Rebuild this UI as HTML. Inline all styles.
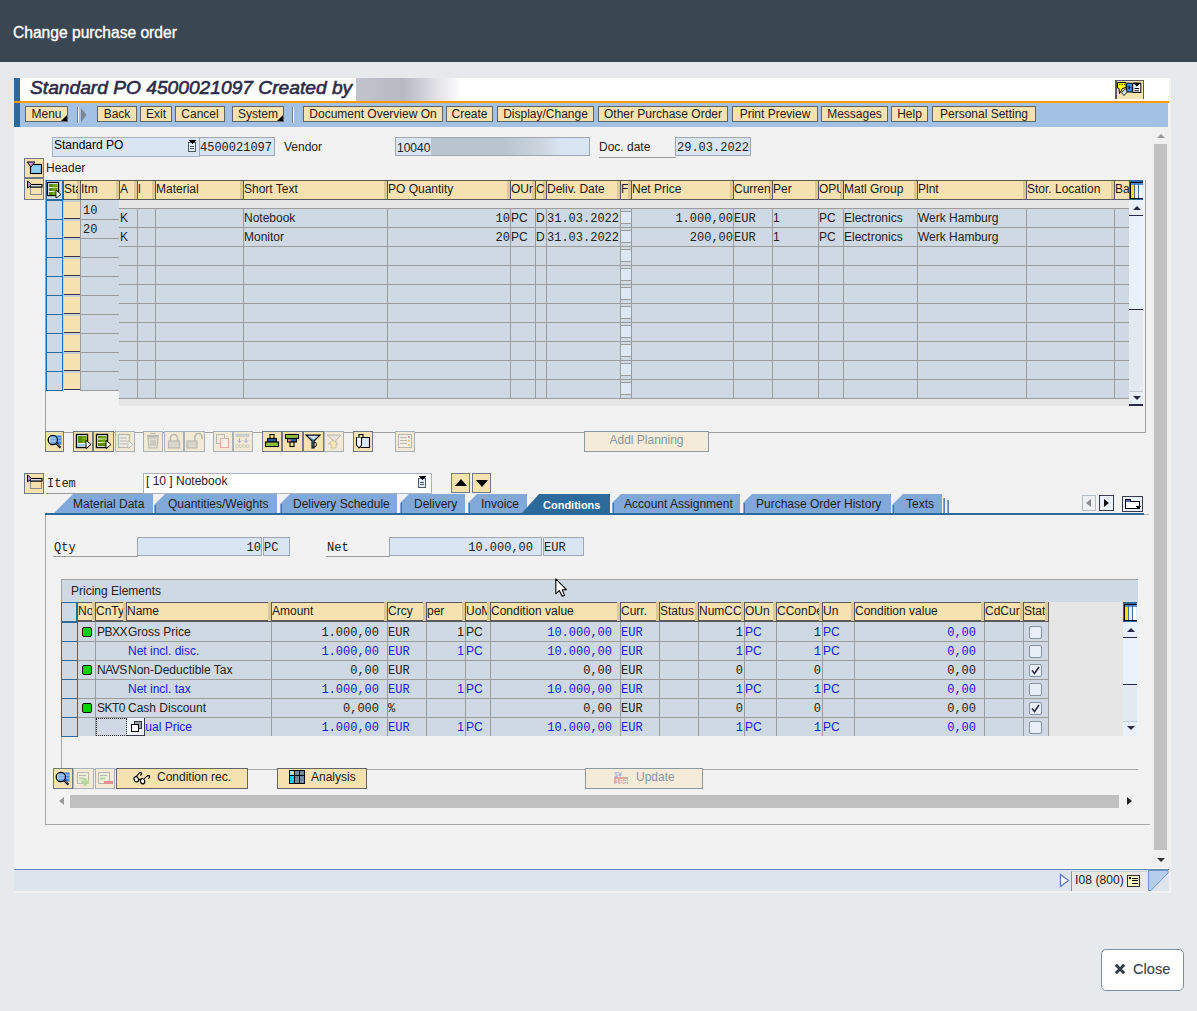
<!DOCTYPE html><html><head><meta charset="utf-8"><style>
*{margin:0;padding:0;box-sizing:border-box}
html,body{width:1197px;height:1011px;overflow:hidden;background:#e6eaed;font-family:"Liberation Sans",sans-serif;font-size:12px;color:#000}
div{position:absolute}
.t{white-space:nowrap;line-height:14px}
.m{font-family:"Liberation Mono",monospace;white-space:nowrap;line-height:14px}
.btn{background:#f5e2b0;border:1px solid #646464;text-align:center;line-height:14px;white-space:nowrap;color:#1a1a1a}
.ib{background:#f5e2b0;border:1px solid #6f7a86}
.ibd{background:#f3ead6;border:1px solid #a9b2bb}
.fld{background:#dae5f3;border:1px solid #a0a8b4}
.hd{background:#f5e2b0;height:20px;border-bottom:2px solid #5e5e5e}
.hc{height:18px;top:0;border-right:3px solid #d9c594;line-height:17px;padding-left:1px;overflow:hidden;white-space:nowrap;color:#1a1a1a}
</style></head><body>
<div style="left:0px;top:0px;width:1197px;height:62px;background:#3a4753"></div>
<div class="t" style="left:13px;top:24px;color:#fff;font-size:15.6px;line-height:18px;-webkit-text-stroke:0.35px #fff">Change purchase order</div>
<div style="left:14px;top:78px;width:1157px;height:815px;background:#f2f2f2"></div>
<div style="left:14px;top:78px;width:1155px;height:23px;background:#fff"></div>
<div style="left:14px;top:78px;width:6px;height:49px;background:#2e6a9c"></div>
<div class="t" style="left:30px;top:78px;font-size:19.2px;font-style:italic;color:#2b2b48;line-height:20px;-webkit-text-stroke:0.6px #2b2b48">Standard PO 4500021097 Created by</div>
<div style="left:356px;top:78px;width:106px;height:23px;background:linear-gradient(90deg,#c4c4cc 0%,#b8b8c4 45%,#e0e0e6 75%,#fff 100%)"></div>
<div style="left:1155px;top:78px;width:14px;height:0px;"></div>
<div style="left:14px;top:101px;width:1155px;height:2px;background:#ff9900"></div>
<div style="left:20px;top:103px;width:1148px;height:24px;background:#a3c1e5"></div>
<div class="btn" style="left:25px;top:106px;width:43px;height:16px">Menu</div>
<div class="btn" style="left:97px;top:106px;width:40px;height:16px">Back</div>
<div class="btn" style="left:140px;top:106px;width:32px;height:16px">Exit</div>
<div class="btn" style="left:175px;top:106px;width:50px;height:16px">Cancel</div>
<div class="btn" style="left:232px;top:106px;width:52px;height:16px">System</div>
<div class="btn" style="left:303px;top:106px;width:140px;height:16px">Document Overview On</div>
<div class="btn" style="left:446px;top:106px;width:47px;height:16px">Create</div>
<div class="btn" style="left:497px;top:106px;width:97px;height:16px">Display/Change</div>
<div class="btn" style="left:598px;top:106px;width:130px;height:16px">Other Purchase Order</div>
<div class="btn" style="left:732px;top:106px;width:86px;height:16px">Print Preview</div>
<div class="btn" style="left:821px;top:106px;width:67px;height:16px">Messages</div>
<div class="btn" style="left:891px;top:106px;width:37px;height:16px">Help</div>
<div class="btn" style="left:932px;top:106px;width:104px;height:16px">Personal Setting</div>
<div style="left:61px;top:115px;width:0;height:0;border-left:6px solid transparent;border-bottom:6px solid #000"></div>
<div style="left:277px;top:115px;width:0;height:0;border-left:6px solid transparent;border-bottom:6px solid #000"></div>
<div style="left:77px;top:107px;width:2px;height:16px;background:#fff;border-left:1px solid #6f7f90"></div>
<svg style="position:absolute;left:81px;top:108px" width="6" height="15"><polygon points="0,0 5.5,7 0,14" fill="#7a8494"/></svg>
<div style="left:292px;top:107px;width:2px;height:16px;background:#fff;border-left:1px solid #6f7f90"></div>
<div style="left:52px;top:137px;width:148px;height:20px;background:#dae5f3;border:1px solid #a7b3c2;border-right:none"></div>
<div class="t" style="left:54px;top:138px;line-height:14px">Standard PO</div>
<div class="fld" style="left:199px;top:137px;width:76px;height:19px"></div>
<div class="m" style="left:200px;top:141px;font-size:12px;color:#222">4500021097</div>
<div class="t" style="left:284px;top:140px;color:#222">Vendor</div>
<div class="fld" style="left:395px;top:137px;width:195px;height:19px"></div>
<div class="t" style="left:397px;top:140.5px;color:#222">10040</div>
<div style="left:431px;top:138px;width:131px;height:17px;background:linear-gradient(90deg,#b9c4cf 0%,#b9c4cf 55%,#cdd6df 85%,#dae5f3 100%)"></div>
<div class="t" style="left:599px;top:140px;color:#222">Doc. date</div>
<div style="left:599px;top:157px;width:77px;height:1px;background:#9a9a9a"></div>
<div class="fld" style="left:675px;top:137px;width:76px;height:19px"></div>
<div class="m" style="left:677px;top:141px;font-size:12px;color:#222">29.03.2022</div>
<div class="ib" style="left:24px;top:158px;width:20px;height:20px"></div>
<div class="t" style="left:46px;top:161px;color:#222">Header</div>
<div class="ib" style="left:24px;top:178px;width:20px;height:22px"></div>
<div style="left:45px;top:180px;width:1101px;height:253px;border:1px solid #a0a0a0;border-top:none;background:#f2f2f2"></div>
<div style="left:46px;top:180px;width:1083px;height:20px;background:#f5e2b0;border-top:1px solid #5a5a5a;border-bottom:1px solid #5a5a5a"></div>
<div style="left:63px;top:181px;width:17px;height:18px;border-left:1px solid #5a5a5a;overflow:hidden"><div style="right:0;top:0;width:3px;height:18px;background:#dcc895"></div><div style="left:0;top:0;width:14px;height:18px;overflow:hidden"><div class="t" style="left:0px;top:1px;color:#1a1a1a">Sta</div></div></div>
<div style="left:80px;top:181px;width:39px;height:18px;border-left:1px solid #5a5a5a;overflow:hidden"><div style="right:0;top:0;width:3px;height:18px;background:#dcc895"></div><div style="left:0;top:0;width:36px;height:18px;overflow:hidden"><div class="t" style="left:0px;top:1px;color:#1a1a1a">Itm</div></div></div>
<div style="left:119px;top:181px;width:18px;height:18px;border-left:1px solid #5a5a5a;overflow:hidden"><div style="right:0;top:0;width:3px;height:18px;background:#dcc895"></div><div style="left:0;top:0;width:15px;height:18px;overflow:hidden"><div class="t" style="left:0px;top:1px;color:#1a1a1a">A</div></div></div>
<div style="left:137px;top:181px;width:18px;height:18px;border-left:1px solid #5a5a5a;overflow:hidden"><div style="right:0;top:0;width:3px;height:18px;background:#dcc895"></div><div style="left:0;top:0;width:15px;height:18px;overflow:hidden"><div class="t" style="left:0px;top:1px;color:#1a1a1a">l</div></div></div>
<div style="left:155px;top:181px;width:88px;height:18px;border-left:1px solid #5a5a5a;overflow:hidden"><div style="right:0;top:0;width:3px;height:18px;background:#dcc895"></div><div style="left:0;top:0;width:85px;height:18px;overflow:hidden"><div class="t" style="left:0px;top:1px;color:#1a1a1a">Material</div></div></div>
<div style="left:243px;top:181px;width:144px;height:18px;border-left:1px solid #5a5a5a;overflow:hidden"><div style="right:0;top:0;width:3px;height:18px;background:#dcc895"></div><div style="left:0;top:0;width:141px;height:18px;overflow:hidden"><div class="t" style="left:0px;top:1px;color:#1a1a1a">Short Text</div></div></div>
<div style="left:387px;top:181px;width:123px;height:18px;border-left:1px solid #5a5a5a;overflow:hidden"><div style="right:0;top:0;width:3px;height:18px;background:#dcc895"></div><div style="left:0;top:0;width:120px;height:18px;overflow:hidden"><div class="t" style="left:0px;top:1px;color:#1a1a1a">PO Quantity</div></div></div>
<div style="left:510px;top:181px;width:25px;height:18px;border-left:1px solid #5a5a5a;overflow:hidden"><div style="right:0;top:0;width:3px;height:18px;background:#dcc895"></div><div style="left:0;top:0;width:22px;height:18px;overflow:hidden"><div class="t" style="left:0px;top:1px;color:#1a1a1a">OUn</div></div></div>
<div style="left:535px;top:181px;width:11px;height:18px;border-left:1px solid #5a5a5a;overflow:hidden"><div style="right:0;top:0;width:3px;height:18px;background:#dcc895"></div><div style="left:0;top:0;width:8px;height:18px;overflow:hidden"><div class="t" style="left:0px;top:1px;color:#1a1a1a">C</div></div></div>
<div style="left:546px;top:181px;width:74px;height:18px;border-left:1px solid #5a5a5a;overflow:hidden"><div style="right:0;top:0;width:3px;height:18px;background:#dcc895"></div><div style="left:0;top:0;width:71px;height:18px;overflow:hidden"><div class="t" style="left:0px;top:1px;color:#1a1a1a">Deliv. Date</div></div></div>
<div style="left:620px;top:181px;width:11px;height:18px;border-left:1px solid #5a5a5a;overflow:hidden"><div style="right:0;top:0;width:3px;height:18px;background:#dcc895"></div><div style="left:0;top:0;width:8px;height:18px;overflow:hidden"><div class="t" style="left:0px;top:1px;color:#1a1a1a">F</div></div></div>
<div style="left:631px;top:181px;width:102px;height:18px;border-left:1px solid #5a5a5a;overflow:hidden"><div style="right:0;top:0;width:3px;height:18px;background:#dcc895"></div><div style="left:0;top:0;width:99px;height:18px;overflow:hidden"><div class="t" style="left:0px;top:1px;color:#1a1a1a">Net Price</div></div></div>
<div style="left:733px;top:181px;width:39px;height:18px;border-left:1px solid #5a5a5a;overflow:hidden"><div style="right:0;top:0;width:3px;height:18px;background:#dcc895"></div><div style="left:0;top:0;width:36px;height:18px;overflow:hidden"><div class="t" style="left:0px;top:1px;color:#1a1a1a">Curren</div></div></div>
<div style="left:772px;top:181px;width:46px;height:18px;border-left:1px solid #5a5a5a;overflow:hidden"><div style="right:0;top:0;width:3px;height:18px;background:#dcc895"></div><div style="left:0;top:0;width:43px;height:18px;overflow:hidden"><div class="t" style="left:0px;top:1px;color:#1a1a1a">Per</div></div></div>
<div style="left:818px;top:181px;width:25px;height:18px;border-left:1px solid #5a5a5a;overflow:hidden"><div style="right:0;top:0;width:3px;height:18px;background:#dcc895"></div><div style="left:0;top:0;width:22px;height:18px;overflow:hidden"><div class="t" style="left:0px;top:1px;color:#1a1a1a">OPU</div></div></div>
<div style="left:843px;top:181px;width:74px;height:18px;border-left:1px solid #5a5a5a;overflow:hidden"><div style="right:0;top:0;width:3px;height:18px;background:#dcc895"></div><div style="left:0;top:0;width:71px;height:18px;overflow:hidden"><div class="t" style="left:0px;top:1px;color:#1a1a1a">Matl Group</div></div></div>
<div style="left:917px;top:181px;width:109px;height:18px;border-left:1px solid #5a5a5a;overflow:hidden"><div style="right:0;top:0;width:3px;height:18px;background:#dcc895"></div><div style="left:0;top:0;width:106px;height:18px;overflow:hidden"><div class="t" style="left:0px;top:1px;color:#1a1a1a">Plnt</div></div></div>
<div style="left:1026px;top:181px;width:88px;height:18px;border-left:1px solid #5a5a5a;overflow:hidden"><div style="right:0;top:0;width:3px;height:18px;background:#dcc895"></div><div style="left:0;top:0;width:85px;height:18px;overflow:hidden"><div class="t" style="left:0px;top:1px;color:#1a1a1a">Stor. Location</div></div></div>
<div style="left:1114px;top:181px;width:15px;height:18px;border-left:1px solid #5a5a5a;overflow:hidden"><div class="t" style="left:0px;top:1px;color:#1a1a1a">Ba</div></div>
<div style="left:46px;top:180px;width:17px;height:20px;border:1px solid #2e6a9c;background:#cfd9e3"></div>
<div style="left:63px;top:200px;width:17px;height:190px;background:#c8d0d8"></div>
<div style="left:80px;top:200px;width:39px;height:190px;background:#cfd9e3;border-left:1px solid #9c9c9c"></div>
<div style="left:46px;top:200px;width:17px;height:20px;border:1px solid #2e6a9c;background:#cfd9e3"></div>
<div style="left:64px;top:202px;width:16px;height:16px;background:#f5e2b0"></div>
<div style="left:64px;top:218px;width:16px;height:1px;background:#34344e"></div>
<div style="left:80px;top:219px;width:39px;height:1px;background:#9c9c9c"></div>
<div style="left:46px;top:219px;width:17px;height:20px;border:1px solid #2e6a9c;background:#cfd9e3"></div>
<div style="left:64px;top:221px;width:16px;height:16px;background:#f5e2b0"></div>
<div style="left:64px;top:237px;width:16px;height:1px;background:#34344e"></div>
<div style="left:80px;top:238px;width:39px;height:1px;background:#9c9c9c"></div>
<div style="left:46px;top:238px;width:17px;height:20px;border:1px solid #2e6a9c;background:#cfd9e3"></div>
<div style="left:64px;top:240px;width:16px;height:16px;background:#f5e2b0"></div>
<div style="left:64px;top:256px;width:16px;height:1px;background:#34344e"></div>
<div style="left:80px;top:257px;width:39px;height:1px;background:#9c9c9c"></div>
<div style="left:46px;top:257px;width:17px;height:20px;border:1px solid #2e6a9c;background:#cfd9e3"></div>
<div style="left:64px;top:259px;width:16px;height:16px;background:#f5e2b0"></div>
<div style="left:64px;top:275px;width:16px;height:1px;background:#34344e"></div>
<div style="left:80px;top:276px;width:39px;height:1px;background:#9c9c9c"></div>
<div style="left:46px;top:276px;width:17px;height:20px;border:1px solid #2e6a9c;background:#cfd9e3"></div>
<div style="left:64px;top:278px;width:16px;height:16px;background:#f5e2b0"></div>
<div style="left:64px;top:294px;width:16px;height:1px;background:#34344e"></div>
<div style="left:80px;top:295px;width:39px;height:1px;background:#9c9c9c"></div>
<div style="left:46px;top:295px;width:17px;height:20px;border:1px solid #2e6a9c;background:#cfd9e3"></div>
<div style="left:64px;top:297px;width:16px;height:16px;background:#f5e2b0"></div>
<div style="left:64px;top:313px;width:16px;height:1px;background:#34344e"></div>
<div style="left:80px;top:314px;width:39px;height:1px;background:#9c9c9c"></div>
<div style="left:46px;top:314px;width:17px;height:20px;border:1px solid #2e6a9c;background:#cfd9e3"></div>
<div style="left:64px;top:316px;width:16px;height:16px;background:#f5e2b0"></div>
<div style="left:64px;top:332px;width:16px;height:1px;background:#34344e"></div>
<div style="left:80px;top:333px;width:39px;height:1px;background:#9c9c9c"></div>
<div style="left:46px;top:333px;width:17px;height:20px;border:1px solid #2e6a9c;background:#cfd9e3"></div>
<div style="left:64px;top:335px;width:16px;height:16px;background:#f5e2b0"></div>
<div style="left:64px;top:351px;width:16px;height:1px;background:#34344e"></div>
<div style="left:80px;top:352px;width:39px;height:1px;background:#9c9c9c"></div>
<div style="left:46px;top:352px;width:17px;height:20px;border:1px solid #2e6a9c;background:#cfd9e3"></div>
<div style="left:64px;top:354px;width:16px;height:16px;background:#f5e2b0"></div>
<div style="left:64px;top:370px;width:16px;height:1px;background:#34344e"></div>
<div style="left:80px;top:371px;width:39px;height:1px;background:#9c9c9c"></div>
<div style="left:46px;top:371px;width:17px;height:20px;border:1px solid #2e6a9c;background:#cfd9e3"></div>
<div style="left:64px;top:373px;width:16px;height:16px;background:#f5e2b0"></div>
<div style="left:64px;top:389px;width:16px;height:1px;background:#34344e"></div>
<div style="left:80px;top:390px;width:39px;height:1px;background:#9c9c9c"></div>
<div class="m" style="left:83px;top:204px;color:#222">10</div>
<div class="m" style="left:83px;top:223px;color:#222">20</div>
<div style="left:119px;top:200px;width:1010px;height:8px;background:#e6e6e6"></div>
<div style="left:119px;top:399px;width:1010px;height:7px;background:#e6e6e6"></div>
<div style="left:119px;top:208px;width:1010px;height:191px;background:#cfd9e3;background-image:repeating-linear-gradient(180deg,#9c9c9c 0,#9c9c9c 1px,transparent 1px,transparent 19px)"></div>
<div style="left:137px;top:208px;width:1px;height:190px;background:#9c9c9c"></div>
<div style="left:155px;top:208px;width:1px;height:190px;background:#9c9c9c"></div>
<div style="left:243px;top:208px;width:1px;height:190px;background:#9c9c9c"></div>
<div style="left:387px;top:208px;width:1px;height:190px;background:#9c9c9c"></div>
<div style="left:510px;top:208px;width:1px;height:190px;background:#9c9c9c"></div>
<div style="left:535px;top:208px;width:1px;height:190px;background:#9c9c9c"></div>
<div style="left:546px;top:208px;width:1px;height:190px;background:#9c9c9c"></div>
<div style="left:620px;top:208px;width:1px;height:190px;background:#9c9c9c"></div>
<div style="left:631px;top:208px;width:1px;height:190px;background:#9c9c9c"></div>
<div style="left:733px;top:208px;width:1px;height:190px;background:#9c9c9c"></div>
<div style="left:772px;top:208px;width:1px;height:190px;background:#9c9c9c"></div>
<div style="left:818px;top:208px;width:1px;height:190px;background:#9c9c9c"></div>
<div style="left:843px;top:208px;width:1px;height:190px;background:#9c9c9c"></div>
<div style="left:917px;top:208px;width:1px;height:190px;background:#9c9c9c"></div>
<div style="left:1026px;top:208px;width:1px;height:190px;background:#9c9c9c"></div>
<div style="left:1114px;top:208px;width:1px;height:190px;background:#9c9c9c"></div>
<div style="left:119px;top:398px;width:1010px;height:1px;background:#9c9c9c"></div>
<div style="left:621px;top:211px;width:10px;height:13px;background:#dde8f4;border-top:1px solid #9c9c9c;border-bottom:1px solid #9c9c9c"></div>
<div style="left:621px;top:230px;width:10px;height:13px;background:#dde8f4;border-top:1px solid #9c9c9c;border-bottom:1px solid #9c9c9c"></div>
<div style="left:621px;top:249px;width:10px;height:13px;background:#dde8f4;border-top:1px solid #9c9c9c;border-bottom:1px solid #9c9c9c"></div>
<div style="left:621px;top:268px;width:10px;height:13px;background:#dde8f4;border-top:1px solid #9c9c9c;border-bottom:1px solid #9c9c9c"></div>
<div style="left:621px;top:287px;width:10px;height:13px;background:#dde8f4;border-top:1px solid #9c9c9c;border-bottom:1px solid #9c9c9c"></div>
<div style="left:621px;top:306px;width:10px;height:13px;background:#dde8f4;border-top:1px solid #9c9c9c;border-bottom:1px solid #9c9c9c"></div>
<div style="left:621px;top:325px;width:10px;height:13px;background:#dde8f4;border-top:1px solid #9c9c9c;border-bottom:1px solid #9c9c9c"></div>
<div style="left:621px;top:344px;width:10px;height:13px;background:#dde8f4;border-top:1px solid #9c9c9c;border-bottom:1px solid #9c9c9c"></div>
<div style="left:621px;top:363px;width:10px;height:13px;background:#dde8f4;border-top:1px solid #9c9c9c;border-bottom:1px solid #9c9c9c"></div>
<div style="left:621px;top:382px;width:10px;height:13px;background:#dde8f4;border-top:1px solid #9c9c9c;border-bottom:1px solid #9c9c9c"></div>
<div class="t" style="left:120px;top:211px;color:#222">K</div>
<div class="t" style="left:244px;top:211px;color:#222">Notebook</div>
<div class="m" style="left:387px;top:212px;width:123px;text-align:right;color:#222">10</div>
<div class="t" style="left:511px;top:211px;color:#222">PC</div>
<div class="t" style="left:536px;top:211px;color:#222">D</div>
<div class="m" style="left:547px;top:212px;color:#222">31.03.2022</div>
<div class="m" style="left:631px;top:212px;width:102px;text-align:right;color:#222">1.000,00</div>
<div class="m" style="left:734px;top:212px;color:#222">EUR</div>
<div class="t" style="left:773px;top:211px;color:#222">1</div>
<div class="t" style="left:819px;top:211px;color:#222">PC</div>
<div class="t" style="left:844px;top:211px;color:#222">Electronics</div>
<div class="t" style="left:918px;top:211px;color:#222">Werk Hamburg</div>
<div class="t" style="left:120px;top:230px;color:#222">K</div>
<div class="t" style="left:244px;top:230px;color:#222">Monitor</div>
<div class="m" style="left:387px;top:231px;width:123px;text-align:right;color:#222">20</div>
<div class="t" style="left:511px;top:230px;color:#222">PC</div>
<div class="t" style="left:536px;top:230px;color:#222">D</div>
<div class="m" style="left:547px;top:231px;color:#222">31.03.2022</div>
<div class="m" style="left:631px;top:231px;width:102px;text-align:right;color:#222">200,00</div>
<div class="m" style="left:734px;top:231px;color:#222">EUR</div>
<div class="t" style="left:773px;top:230px;color:#222">1</div>
<div class="t" style="left:819px;top:230px;color:#222">PC</div>
<div class="t" style="left:844px;top:230px;color:#222">Electronics</div>
<div class="t" style="left:918px;top:230px;color:#222">Werk Hamburg</div>
<div style="left:1129px;top:200px;width:14px;height:206px;background:#e3e9f1"></div>
<div style="left:1129px;top:200px;width:14px;height:109px;background:#e9f1fa"></div>
<div style="left:1129px;top:309px;width:14px;height:1px;background:#2a2a50"></div>
<div style="left:1132.5px;top:205.5px;width:0;height:0;border-left:4.5px solid transparent;border-right:4.5px solid transparent;border-bottom:4.5px solid #2a2a48"></div>
<div style="left:1129px;top:215px;width:14px;height:1px;background:#2a2a50"></div>
<div style="left:1129px;top:391px;width:14px;height:15px;background:#e9f1fa;border-top:1px solid #c4ccd6;border-bottom:2px solid #2a2a50"></div>
<div style="left:1132.5px;top:396px;width:0;height:0;border-left:4.5px solid transparent;border-right:4.5px solid transparent;border-top:4.5px solid #2a2a48"></div>
<div class="ib" style="left:45px;top:431px;width:19px;height:21px"></div>
<div class="ib" style="left:73px;top:431px;width:20px;height:21px"></div>
<div class="ib" style="left:93px;top:431px;width:21px;height:21px"></div>
<div class="ibd" style="left:115px;top:431px;width:20px;height:21px"></div>
<div class="ibd" style="left:143px;top:431px;width:20px;height:21px"></div>
<div class="ibd" style="left:164px;top:431px;width:20px;height:21px"></div>
<div class="ibd" style="left:184px;top:431px;width:21px;height:21px"></div>
<div class="ibd" style="left:213px;top:431px;width:20px;height:21px"></div>
<div class="ibd" style="left:233px;top:431px;width:20px;height:21px"></div>
<div class="ib" style="left:262px;top:431px;width:20px;height:21px"></div>
<div class="ib" style="left:282px;top:431px;width:21px;height:21px"></div>
<div class="ib" style="left:303px;top:431px;width:21px;height:21px"></div>
<div class="ibd" style="left:324px;top:431px;width:20px;height:21px"></div>
<div class="ib" style="left:353px;top:431px;width:20px;height:21px"></div>
<div class="ibd" style="left:395px;top:431px;width:20px;height:21px"></div>
<div class="btn" style="left:584px;top:431px;width:125px;height:21px;background:#f4ecd8;border-color:#8a98a4;color:#8896a2;line-height:17px;font-size:12px">Addl Planning</div>
<div class="ib" style="left:24px;top:473px;width:20px;height:21px"></div>
<div class="m" style="left:47px;top:476.5px;color:#222">Item</div>
<div style="left:46px;top:493px;width:97px;height:1px;background:#9a9a9a"></div>
<div style="left:143px;top:473px;width:289px;height:21px;background:#fff;border:1px solid #a7b3c2"></div>
<div class="t" style="left:146px;top:474px;color:#222">[ 10 ] Notebook</div>
<div class="ib" style="left:451px;top:473px;width:19px;height:20px"></div>
<div style="left:455px;top:479px;width:0;height:0;border-left:6px solid transparent;border-right:6px solid transparent;border-bottom:7px solid #000"></div>
<div class="ib" style="left:472px;top:473px;width:19px;height:20px"></div>
<div style="left:476px;top:480px;width:0;height:0;border-left:6px solid transparent;border-right:6px solid transparent;border-top:7px solid #000"></div>
<svg style="position:absolute;left:54px;top:494px" width="99" height="19"><polygon points="19,0 99,0 99,19 0,19" fill="#80a8d8"/></svg>
<div class="t" style="left:73px;top:497px;color:#1f1f1f;font-weight:normal;font-size:12px;line-height:14px">Material Data</div>
<svg style="position:absolute;left:154px;top:494px" width="123" height="19"><polygon points="11,0 123,0 123,19 0,19 0,11" fill="#80a8d8"/></svg>
<div style="left:155px;top:505px;width:1px;height:8px;background:#4a72aa"></div>
<div class="t" style="left:168px;top:497px;color:#1f1f1f;font-weight:normal;font-size:12px;line-height:14px">Quantities/Weights</div>
<svg style="position:absolute;left:280px;top:494px" width="117" height="19"><polygon points="10,0 117,0 117,19 0,19 0,10" fill="#80a8d8"/></svg>
<div style="left:281px;top:504px;width:1px;height:9px;background:#4a72aa"></div>
<div class="t" style="left:293px;top:497px;color:#1f1f1f;font-weight:normal;font-size:12px;line-height:14px">Delivery Schedule</div>
<svg style="position:absolute;left:400px;top:494px" width="65" height="19"><polygon points="9,0 65,0 65,19 0,19 0,9" fill="#80a8d8"/></svg>
<div style="left:401px;top:503px;width:1px;height:10px;background:#4a72aa"></div>
<div class="t" style="left:414px;top:497px;color:#1f1f1f;font-weight:normal;font-size:12px;line-height:14px">Delivery</div>
<svg style="position:absolute;left:468px;top:494px" width="59" height="19"><polygon points="9,0 59,0 59,19 0,19 0,9" fill="#80a8d8"/></svg>
<div style="left:469px;top:503px;width:1px;height:10px;background:#4a72aa"></div>
<div class="t" style="left:481px;top:497px;color:#1f1f1f;font-weight:normal;font-size:12px;line-height:14px">Invoice</div>
<svg style="position:absolute;left:522px;top:494px" width="88" height="19"><polygon points="17,0 88,0 88,19 0,19" fill="#2d6a9c"/></svg>
<div class="t" style="left:543px;top:498px;color:#fff;font-weight:bold;font-size:11px;line-height:14px">Conditions</div>
<svg style="position:absolute;left:612px;top:494px" width="128" height="19"><polygon points="9,0 128,0 128,19 0,19 0,9" fill="#80a8d8"/></svg>
<div style="left:613px;top:503px;width:1px;height:10px;background:#4a72aa"></div>
<div class="t" style="left:624px;top:497px;color:#1f1f1f;font-weight:normal;font-size:12px;line-height:14px">Account Assignment</div>
<svg style="position:absolute;left:743px;top:494px" width="148" height="19"><polygon points="9,0 148,0 148,19 0,19 0,9" fill="#80a8d8"/></svg>
<div style="left:744px;top:503px;width:1px;height:10px;background:#4a72aa"></div>
<div class="t" style="left:756px;top:497px;color:#1f1f1f;font-weight:normal;font-size:12px;line-height:14px">Purchase Order History</div>
<svg style="position:absolute;left:892px;top:494px" width="50" height="19"><polygon points="11,0 50,0 50,19 0,19 0,11" fill="#80a8d8"/></svg>
<div style="left:893px;top:505px;width:1px;height:8px;background:#4a72aa"></div>
<div class="t" style="left:906px;top:497px;color:#1f1f1f;font-weight:normal;font-size:12px;line-height:14px">Texts</div>
<div style="left:943px;top:498px;width:2px;height:15px;background:#80a8d8;border-right:1px solid #5a86c0"></div>
<div style="left:947px;top:500px;width:2px;height:13px;background:#80a8d8;border-right:1px solid #5a86c0"></div>
<div style="left:45px;top:513px;width:1099px;height:2px;background:#2d6a9c"></div>
<div style="left:1144px;top:514px;width:5px;height:1px;background:#b0b8c0"></div>
<div style="left:1082px;top:495px;width:14px;height:16px;border:1px solid #b6bcc4;background:#eef0f3"></div>
<div style="left:1086px;top:499px;width:0;height:0;border-top:4px solid transparent;border-bottom:4px solid transparent;border-right:5px solid #8a8a8a"></div>
<div style="left:1099px;top:495px;width:15px;height:16px;border:1px solid #3a3a50;background:#eaf1fa"></div>
<div style="left:1104px;top:499px;width:0;height:0;border-top:4px solid transparent;border-bottom:4px solid transparent;border-left:5px solid #111"></div>
<div style="left:45px;top:515px;width:1105px;height:310px;border-left:1px solid #a8a8a8;border-bottom:1px solid #a8a8a8;background:#f2f2f2"></div>
<div class="m" style="left:54px;top:541px;color:#222">Qty</div>
<div style="left:53px;top:556px;width:85px;height:1px;background:#9a9a9a"></div>
<div class="fld" style="left:137px;top:537px;width:125px;height:19px"></div>
<div class="m" style="left:137px;top:541px;width:124px;text-align:right;color:#222">10</div>
<div class="fld" style="left:263px;top:537px;width:27px;height:19px"></div>
<div class="m" style="left:264px;top:541px;color:#222">PC</div>
<div class="m" style="left:327px;top:541px;color:#222">Net</div>
<div style="left:326px;top:556px;width:64px;height:1px;background:#9a9a9a"></div>
<div class="fld" style="left:389px;top:537px;width:153px;height:19px"></div>
<div class="m" style="left:389px;top:541px;width:144px;text-align:right;color:#222">10.000,00</div>
<div class="fld" style="left:543px;top:537px;width:41px;height:19px"></div>
<div class="m" style="left:544px;top:541px;color:#222">EUR</div>
<div style="left:61px;top:579px;width:1077px;height:23px;background:#cfd9e3;border-top:1px solid #a2a2a2;border-left:1px solid #a2a2a2"></div>
<div class="t" style="left:71px;top:584px;color:#222">Pricing Elements</div>
<div style="left:61px;top:602px;width:1062px;height:134px;background:#e6e6e6"></div>
<div style="left:61px;top:602px;width:1px;height:167px;background:#a8a8a8"></div>
<div style="left:62px;top:602px;width:986px;height:20px;background:#f5e2b0;border-bottom:2px solid #5a5a5a;border-top:1px solid #5a5a5a"></div>
<div style="left:77px;top:602px;width:18px;height:19px;border-left:1px solid #5a5a5a;overflow:hidden"><div style="right:0;top:0;width:3px;height:19px;background:#dcc895"></div><div style="left:0;top:0;width:14px;height:19px;overflow:hidden"><div class="t" style="left:0px;top:2px;color:#1a1a1a">No</div></div></div>
<div style="left:95px;top:602px;width:31px;height:19px;border-left:1px solid #5a5a5a;overflow:hidden"><div style="right:0;top:0;width:3px;height:19px;background:#dcc895"></div><div style="left:0;top:0;width:27px;height:19px;overflow:hidden"><div class="t" style="left:0px;top:2px;color:#1a1a1a">CnTy</div></div></div>
<div style="left:126px;top:602px;width:145px;height:19px;border-left:1px solid #5a5a5a;overflow:hidden"><div style="right:0;top:0;width:3px;height:19px;background:#dcc895"></div><div style="left:0;top:0;width:141px;height:19px;overflow:hidden"><div class="t" style="left:0px;top:2px;color:#1a1a1a">Name</div></div></div>
<div style="left:271px;top:602px;width:116px;height:19px;border-left:1px solid #5a5a5a;overflow:hidden"><div style="right:0;top:0;width:3px;height:19px;background:#dcc895"></div><div style="left:0;top:0;width:112px;height:19px;overflow:hidden"><div class="t" style="left:0px;top:2px;color:#1a1a1a">Amount</div></div></div>
<div style="left:387px;top:602px;width:39px;height:19px;border-left:1px solid #5a5a5a;overflow:hidden"><div style="right:0;top:0;width:3px;height:19px;background:#dcc895"></div><div style="left:0;top:0;width:35px;height:19px;overflow:hidden"><div class="t" style="left:0px;top:2px;color:#1a1a1a">Crcy</div></div></div>
<div style="left:426px;top:602px;width:39px;height:19px;border-left:1px solid #5a5a5a;overflow:hidden"><div style="right:0;top:0;width:3px;height:19px;background:#dcc895"></div><div style="left:0;top:0;width:35px;height:19px;overflow:hidden"><div class="t" style="left:0px;top:2px;color:#1a1a1a">per</div></div></div>
<div style="left:465px;top:602px;width:25px;height:19px;border-left:1px solid #5a5a5a;overflow:hidden"><div style="right:0;top:0;width:3px;height:19px;background:#dcc895"></div><div style="left:0;top:0;width:21px;height:19px;overflow:hidden"><div class="t" style="left:0px;top:2px;color:#1a1a1a">UoM</div></div></div>
<div style="left:490px;top:602px;width:130px;height:19px;border-left:1px solid #5a5a5a;overflow:hidden"><div style="right:0;top:0;width:3px;height:19px;background:#dcc895"></div><div style="left:0;top:0;width:126px;height:19px;overflow:hidden"><div class="t" style="left:0px;top:2px;color:#1a1a1a">Condition value</div></div></div>
<div style="left:620px;top:602px;width:39px;height:19px;border-left:1px solid #5a5a5a;overflow:hidden"><div style="right:0;top:0;width:3px;height:19px;background:#dcc895"></div><div style="left:0;top:0;width:35px;height:19px;overflow:hidden"><div class="t" style="left:0px;top:2px;color:#1a1a1a">Curr.</div></div></div>
<div style="left:659px;top:602px;width:39px;height:19px;border-left:1px solid #5a5a5a;overflow:hidden"><div style="right:0;top:0;width:3px;height:19px;background:#dcc895"></div><div style="left:0;top:0;width:35px;height:19px;overflow:hidden"><div class="t" style="left:0px;top:2px;color:#1a1a1a">Status</div></div></div>
<div style="left:698px;top:602px;width:46px;height:19px;border-left:1px solid #5a5a5a;overflow:hidden"><div style="right:0;top:0;width:3px;height:19px;background:#dcc895"></div><div style="left:0;top:0;width:42px;height:19px;overflow:hidden"><div class="t" style="left:0px;top:2px;color:#1a1a1a">NumCC</div></div></div>
<div style="left:744px;top:602px;width:32px;height:19px;border-left:1px solid #5a5a5a;overflow:hidden"><div style="right:0;top:0;width:3px;height:19px;background:#dcc895"></div><div style="left:0;top:0;width:28px;height:19px;overflow:hidden"><div class="t" style="left:0px;top:2px;color:#1a1a1a">OUn</div></div></div>
<div style="left:776px;top:602px;width:46px;height:19px;border-left:1px solid #5a5a5a;overflow:hidden"><div style="right:0;top:0;width:3px;height:19px;background:#dcc895"></div><div style="left:0;top:0;width:42px;height:19px;overflow:hidden"><div class="t" style="left:0px;top:2px;color:#1a1a1a">CConDe</div></div></div>
<div style="left:822px;top:602px;width:32px;height:19px;border-left:1px solid #5a5a5a;overflow:hidden"><div style="right:0;top:0;width:3px;height:19px;background:#dcc895"></div><div style="left:0;top:0;width:28px;height:19px;overflow:hidden"><div class="t" style="left:0px;top:2px;color:#1a1a1a">Un</div></div></div>
<div style="left:854px;top:602px;width:130px;height:19px;border-left:1px solid #5a5a5a;overflow:hidden"><div style="right:0;top:0;width:3px;height:19px;background:#dcc895"></div><div style="left:0;top:0;width:126px;height:19px;overflow:hidden"><div class="t" style="left:0px;top:2px;color:#1a1a1a">Condition value</div></div></div>
<div style="left:984px;top:602px;width:39px;height:19px;border-left:1px solid #5a5a5a;overflow:hidden"><div style="right:0;top:0;width:3px;height:19px;background:#dcc895"></div><div style="left:0;top:0;width:35px;height:19px;overflow:hidden"><div class="t" style="left:0px;top:2px;color:#1a1a1a">CdCur</div></div></div>
<div style="left:1023px;top:602px;width:25px;height:19px;border-left:1px solid #5a5a5a;overflow:hidden"><div style="right:0;top:0;width:3px;height:19px;background:#dcc895"></div><div style="left:0;top:0;width:21px;height:19px;overflow:hidden"><div class="t" style="left:0px;top:2px;color:#1a1a1a">Stat</div></div></div>
<div style="left:61px;top:602px;width:16px;height:20px;border:1px solid #2e6a9c;background:#cfd9e3"></div>
<div style="left:77px;top:622px;width:971px;height:114px;background:#cfd9e3"></div>
<div style="left:77px;top:641px;width:971px;height:1px;background:#9c9c9c"></div>
<div style="left:77px;top:660px;width:971px;height:1px;background:#9c9c9c"></div>
<div style="left:77px;top:679px;width:971px;height:1px;background:#9c9c9c"></div>
<div style="left:77px;top:698px;width:971px;height:1px;background:#9c9c9c"></div>
<div style="left:77px;top:717px;width:971px;height:1px;background:#9c9c9c"></div>
<div style="left:95px;top:622px;width:1px;height:114px;background:#9c9c9c"></div>
<div style="left:271px;top:622px;width:1px;height:114px;background:#9c9c9c"></div>
<div style="left:387px;top:622px;width:1px;height:114px;background:#9c9c9c"></div>
<div style="left:426px;top:622px;width:1px;height:114px;background:#9c9c9c"></div>
<div style="left:465px;top:622px;width:1px;height:114px;background:#9c9c9c"></div>
<div style="left:490px;top:622px;width:1px;height:114px;background:#9c9c9c"></div>
<div style="left:620px;top:622px;width:1px;height:114px;background:#9c9c9c"></div>
<div style="left:659px;top:622px;width:1px;height:114px;background:#9c9c9c"></div>
<div style="left:698px;top:622px;width:1px;height:114px;background:#9c9c9c"></div>
<div style="left:744px;top:622px;width:1px;height:114px;background:#9c9c9c"></div>
<div style="left:776px;top:622px;width:1px;height:114px;background:#9c9c9c"></div>
<div style="left:822px;top:622px;width:1px;height:114px;background:#9c9c9c"></div>
<div style="left:854px;top:622px;width:1px;height:114px;background:#9c9c9c"></div>
<div style="left:984px;top:622px;width:1px;height:114px;background:#9c9c9c"></div>
<div style="left:1023px;top:622px;width:1px;height:114px;background:#9c9c9c"></div>
<div style="left:1048px;top:622px;width:1px;height:114px;background:#9c9c9c"></div>
<div style="left:1048px;top:602px;width:1px;height:20px;background:#5a5a5a"></div>
<div style="left:61px;top:622px;width:17px;height:20px;border:1px solid #2e6a9c;background:#cfd9e3"></div>
<div style="left:61px;top:641px;width:17px;height:20px;border:1px solid #2e6a9c;background:#cfd9e3"></div>
<div style="left:61px;top:660px;width:17px;height:20px;border:1px solid #2e6a9c;background:#cfd9e3"></div>
<div style="left:61px;top:679px;width:17px;height:20px;border:1px solid #2e6a9c;background:#cfd9e3"></div>
<div style="left:61px;top:698px;width:17px;height:20px;border:1px solid #2e6a9c;background:#cfd9e3"></div>
<div style="left:61px;top:717px;width:17px;height:20px;border:1px solid #2e6a9c;background:#cfd9e3"></div>
<div style="left:82px;top:627px;width:10px;height:10px;background:#00d400;border:1px solid #111;border-radius:2px"></div>
<div class="t" style="left:97px;top:625px;color:#222;letter-spacing:-0.5px">PBXX</div>
<div class="t" style="left:128px;top:625px;color:#222">Gross Price</div>
<div class="m" style="left:271px;top:626px;width:108px;text-align:right;color:#222">1.000,00</div>
<div class="m" style="left:388px;top:626px;color:#222">EUR</div>
<div class="t" style="left:426px;top:625px;width:38px;text-align:right;color:#222">1</div>
<div class="t" style="left:466px;top:625px;color:#222">PC</div>
<div class="m" style="left:490px;top:626px;width:122px;text-align:right;color:#1a1ae6">10.000,00</div>
<div class="m" style="left:621px;top:626px;color:#1a1ae6">EUR</div>
<div class="m" style="left:698px;top:626px;width:45px;text-align:right;color:#222">1</div>
<div class="t" style="left:745px;top:625px;color:#1a1ae6">PC</div>
<div class="m" style="left:776px;top:626px;width:45px;text-align:right;color:#222">1</div>
<div class="t" style="left:823px;top:625px;color:#1a1ae6">PC</div>
<div class="m" style="left:854px;top:626px;width:122px;text-align:right;color:#1a1ae6">0,00</div>
<div style="left:1029px;top:626px;width:13px;height:13px;background:#e8eef6;border:1px solid #8a94a0;border-radius:2px"></div>
<div class="t" style="left:128px;top:644px;color:#1a1ae6">Net incl. disc.</div>
<div class="m" style="left:271px;top:645px;width:108px;text-align:right;color:#1a1ae6">1.000,00</div>
<div class="m" style="left:388px;top:645px;color:#1a1ae6">EUR</div>
<div class="t" style="left:426px;top:644px;width:38px;text-align:right;color:#1a1ae6">1</div>
<div class="t" style="left:466px;top:644px;color:#1a1ae6">PC</div>
<div class="m" style="left:490px;top:645px;width:122px;text-align:right;color:#1a1ae6">10.000,00</div>
<div class="m" style="left:621px;top:645px;color:#1a1ae6">EUR</div>
<div class="m" style="left:698px;top:645px;width:45px;text-align:right;color:#1a1ae6">1</div>
<div class="t" style="left:745px;top:644px;color:#1a1ae6">PC</div>
<div class="m" style="left:776px;top:645px;width:45px;text-align:right;color:#1a1ae6">1</div>
<div class="t" style="left:823px;top:644px;color:#1a1ae6">PC</div>
<div class="m" style="left:854px;top:645px;width:122px;text-align:right;color:#1a1ae6">0,00</div>
<div style="left:1029px;top:645px;width:13px;height:13px;background:#e8eef6;border:1px solid #8a94a0;border-radius:2px"></div>
<div style="left:82px;top:665px;width:10px;height:10px;background:#00d400;border:1px solid #111;border-radius:2px"></div>
<div class="t" style="left:97px;top:663px;color:#222;letter-spacing:-0.5px">NAVS</div>
<div class="t" style="left:128px;top:663px;color:#222">Non-Deductible Tax</div>
<div class="m" style="left:271px;top:664px;width:108px;text-align:right;color:#222">0,00</div>
<div class="m" style="left:388px;top:664px;color:#222">EUR</div>
<div class="m" style="left:490px;top:664px;width:122px;text-align:right;color:#222">0,00</div>
<div class="m" style="left:621px;top:664px;color:#222">EUR</div>
<div class="m" style="left:698px;top:664px;width:45px;text-align:right;color:#222">0</div>
<div class="m" style="left:776px;top:664px;width:45px;text-align:right;color:#222">0</div>
<div class="m" style="left:854px;top:664px;width:122px;text-align:right;color:#222">0,00</div>
<div style="left:1029px;top:664px;width:13px;height:13px;background:#e8eef6;border:1px solid #8a94a0;border-radius:2px"></div>
<svg style="position:absolute;left:1030px;top:665px" width="11" height="11"><path d="M2 5.5 L4.5 8.5 L9 2" stroke="#2a2a48" stroke-width="1.6" fill="none"/></svg>
<div class="t" style="left:128px;top:682px;color:#1a1ae6">Net incl. tax</div>
<div class="m" style="left:271px;top:683px;width:108px;text-align:right;color:#1a1ae6">1.000,00</div>
<div class="m" style="left:388px;top:683px;color:#1a1ae6">EUR</div>
<div class="t" style="left:426px;top:682px;width:38px;text-align:right;color:#1a1ae6">1</div>
<div class="t" style="left:466px;top:682px;color:#1a1ae6">PC</div>
<div class="m" style="left:490px;top:683px;width:122px;text-align:right;color:#1a1ae6">10.000,00</div>
<div class="m" style="left:621px;top:683px;color:#1a1ae6">EUR</div>
<div class="m" style="left:698px;top:683px;width:45px;text-align:right;color:#1a1ae6">1</div>
<div class="t" style="left:745px;top:682px;color:#1a1ae6">PC</div>
<div class="m" style="left:776px;top:683px;width:45px;text-align:right;color:#1a1ae6">1</div>
<div class="t" style="left:823px;top:682px;color:#1a1ae6">PC</div>
<div class="m" style="left:854px;top:683px;width:122px;text-align:right;color:#1a1ae6">0,00</div>
<div style="left:1029px;top:683px;width:13px;height:13px;background:#e8eef6;border:1px solid #8a94a0;border-radius:2px"></div>
<div style="left:82px;top:703px;width:10px;height:10px;background:#00d400;border:1px solid #111;border-radius:2px"></div>
<div class="t" style="left:97px;top:701px;color:#222;letter-spacing:-0.5px">SKT0</div>
<div class="t" style="left:128px;top:701px;color:#222">Cash Discount</div>
<div class="m" style="left:271px;top:702px;width:108px;text-align:right;color:#222">0,000</div>
<div class="m" style="left:388px;top:702px;color:#222">%</div>
<div class="m" style="left:490px;top:702px;width:122px;text-align:right;color:#222">0,00</div>
<div class="m" style="left:621px;top:702px;color:#222">EUR</div>
<div class="m" style="left:698px;top:702px;width:45px;text-align:right;color:#222">0</div>
<div class="m" style="left:776px;top:702px;width:45px;text-align:right;color:#222">0</div>
<div class="m" style="left:854px;top:702px;width:122px;text-align:right;color:#222">0,00</div>
<div style="left:1029px;top:702px;width:13px;height:13px;background:#e8eef6;border:1px solid #8a94a0;border-radius:2px"></div>
<svg style="position:absolute;left:1030px;top:703px" width="11" height="11"><path d="M2 5.5 L4.5 8.5 L9 2" stroke="#2a2a48" stroke-width="1.6" fill="none"/></svg>
<div class="t" style="left:128px;top:720px;color:#1a1ae6">Actual Price</div>
<div class="m" style="left:271px;top:721px;width:108px;text-align:right;color:#1a1ae6">1.000,00</div>
<div class="m" style="left:388px;top:721px;color:#1a1ae6">EUR</div>
<div class="t" style="left:426px;top:720px;width:38px;text-align:right;color:#1a1ae6">1</div>
<div class="t" style="left:466px;top:720px;color:#1a1ae6">PC</div>
<div class="m" style="left:490px;top:721px;width:122px;text-align:right;color:#1a1ae6">10.000,00</div>
<div class="m" style="left:621px;top:721px;color:#1a1ae6">EUR</div>
<div class="m" style="left:698px;top:721px;width:45px;text-align:right;color:#1a1ae6">1</div>
<div class="t" style="left:745px;top:720px;color:#1a1ae6">PC</div>
<div class="m" style="left:776px;top:721px;width:45px;text-align:right;color:#1a1ae6">1</div>
<div class="t" style="left:823px;top:720px;color:#1a1ae6">PC</div>
<div class="m" style="left:854px;top:721px;width:122px;text-align:right;color:#1a1ae6">0,00</div>
<div style="left:1029px;top:721px;width:13px;height:13px;background:#e8eef6;border:1px solid #8a94a0;border-radius:2px"></div>
<div style="left:96px;top:718px;width:31px;height:18px;border:1px dotted #222;background:#cfd9e3"></div>
<div style="left:127px;top:718px;width:18px;height:18px;background:#eef4fa;border-right:1px solid #3a3a50;border-bottom:1px solid #3a3a50"></div>
<svg style="position:absolute;left:131px;top:721px" width="12" height="12"><rect x="3.5" y="0.5" width="7" height="7" fill="#9aa4ae" stroke="#333" stroke-width="1"/><rect x="0.5" y="3.5" width="7" height="7" fill="#fff" stroke="#000" stroke-width="1"/></svg>
<div style="left:1123px;top:622px;width:14px;height:114px;background:#e3e9f1"></div>
<div style="left:1123px;top:622px;width:14px;height:63px;background:#e9f1fa"></div>
<div style="left:1123px;top:637px;width:14px;height:1px;background:#2a2a50"></div>
<div style="left:1123px;top:684px;width:14px;height:1px;background:#2a2a50"></div>
<div style="left:1127px;top:627.5px;width:0;height:0;border-left:4.5px solid transparent;border-right:4.5px solid transparent;border-bottom:4.5px solid #2a2a48"></div>
<div style="left:1123px;top:721px;width:14px;height:15px;background:#e9f1fa;border-top:1px solid #c4ccd6"></div>
<div style="left:1127px;top:726px;width:0;height:0;border-left:4.5px solid transparent;border-right:4.5px solid transparent;border-top:4.5px solid #2a2a48"></div>
<div style="left:61px;top:769px;width:1077px;height:1px;background:#a8a8a8"></div>
<div class="ib" style="left:53px;top:768px;width:20px;height:21px"></div>
<div class="ibd" style="left:73px;top:768px;width:21px;height:21px"></div>
<div class="ibd" style="left:95px;top:768px;width:20px;height:21px"></div>
<div class="btn" style="left:116px;top:768px;width:132px;height:21px;line-height:18px"><span style="position:absolute;left:40px;top:-1px">Condition rec.</span></div>
<div class="btn" style="left:277px;top:768px;width:90px;height:21px;line-height:18px"><span style="position:absolute;left:33px;top:-1px">Analysis</span></div>
<div class="btn" style="left:585px;top:768px;width:118px;height:21px;line-height:18px;background:#f4ecd8;border-color:#8a98a4;color:#8896a2"><span style="position:absolute;left:50px;top:-1px;color:#8896a2">Update</span></div>
<div style="left:59px;top:797px;width:0;height:0;border-top:4px solid transparent;border-bottom:4px solid transparent;border-right:5px solid #9a9a9a"></div>
<div style="left:70px;top:795px;width:1049px;height:13px;background:#c0c0c0"></div>
<div style="left:1127px;top:797px;width:0;height:0;border-top:4px solid transparent;border-bottom:4px solid transparent;border-left:5px solid #222"></div>
<div style="left:1152px;top:127px;width:19px;height:742px;background:#f0f0f0"></div>
<div style="left:1156.5px;top:133.5px;width:0;height:0;border-left:4px solid transparent;border-right:4px solid transparent;border-bottom:4.5px solid #9a9a9a"></div>
<div style="left:1154px;top:144px;width:13px;height:706px;background:#c2c2c2"></div>
<div style="left:1156.5px;top:858px;width:0;height:0;border-left:4px solid transparent;border-right:4px solid transparent;border-top:4.5px solid #333"></div>
<div style="left:14px;top:868px;width:1155px;height:23px;background:#dde4ee;border-top:1px solid #fff"></div>
<div style="left:14px;top:869px;width:1155px;height:1px;background:#6289b6"></div>
<svg style="position:absolute;left:1059px;top:873px" width="12" height="16"><polygon points="1.5,1.5 9.5,7.5 1.5,13.5" fill="#fff" stroke="#5a7ac0" stroke-width="1.3"/></svg>
<div style="left:1071px;top:871px;width:76px;height:20px;background:#e8e8e8;border-left:1px solid #7096c8;border-top:1px solid #c8d4e4"></div>
<div class="t" style="left:1075px;top:873px;color:#222;letter-spacing:0.1px">I08 (800)</div>
<svg style="position:absolute;left:1148px;top:870px" width="21" height="21"><polygon points="0.5,0.5 20,0.5 20,3 3,20.5 0.5,20.5" fill="#b4cdec" stroke="#7096c8" stroke-width="1"/></svg>
<div style="left:1101px;top:949px;width:83px;height:42px;background:#fff;border:1px solid #7d8fa2;border-radius:5px"></div>
<svg style="position:absolute;left:1114px;top:963px" width="12" height="12"><path d="M1.8 1.8 L10.2 10.2 M10.2 1.8 L1.8 10.2" stroke="#35414d" stroke-width="3" stroke-linecap="butt"/></svg>
<div class="t" style="left:1133px;top:960px;color:#35414d;font-size:14.6px;line-height:18px;-webkit-text-stroke:0.12px #35414d">Close</div>
<svg style="position:absolute;left:24px;top:158px;overflow:visible" width="20" height="20"><rect x="6.5" y="6.5" width="11" height="9" fill="#8ccff0" stroke="#000" stroke-width="1.2"/><polygon points="3,4 11,4 7,9" fill="#c89ad8" stroke="#000" stroke-width="1"/></svg>
<svg style="position:absolute;left:24px;top:179px;overflow:visible" width="20" height="21"><rect x="6.5" y="8.5" width="11" height="7" fill="none" stroke="#8a8a8a" stroke-width="1"/><rect x="6" y="5.5" width="12" height="2.5" fill="#e0ecf4" stroke="#000" stroke-width="1.1"/><polygon points="3.5,2 3.5,9 7.5,5.5" fill="#c89ad8" stroke="#000" stroke-width="1"/></svg>
<svg style="position:absolute;left:24px;top:473px;overflow:visible" width="20" height="21"><rect x="6.5" y="8.5" width="11" height="7" fill="none" stroke="#8a8a8a" stroke-width="1"/><rect x="6" y="5.5" width="12" height="2.5" fill="#e0ecf4" stroke="#000" stroke-width="1.1"/><polygon points="3.5,2 3.5,9 7.5,5.5" fill="#c89ad8" stroke="#000" stroke-width="1"/></svg>
<svg style="position:absolute;left:46px;top:180px;overflow:visible" width="17" height="20"><rect x="1.5" y="2.5" width="11" height="13" fill="#fff" stroke="#000" stroke-width="1.3"/><rect x="3" y="4" width="8.5" height="3" fill="#5a8a00"/><rect x="3" y="8" width="8.5" height="3" fill="#5a8a00"/><rect x="3" y="12" width="8.5" height="3" fill="#5a8a00"/><rect x="7" y="4" width="4.5" height="11" fill="#86c000" opacity="0.6"/><polygon points="10,10 15,14.5 10,18" fill="#fff" stroke="#000" stroke-width="0.8"/></svg>
<svg style="position:absolute;left:45px;top:431px;overflow:visible" width="20" height="21"><rect x="5.5" y="4.5" width="11" height="9" fill="#3a80e0"/><rect x="5.5" y="6.5" width="11" height="1" fill="#bcd8f4"/><rect x="5.5" y="9.5" width="11" height="1" fill="#bcd8f4"/><rect x="11" y="4.5" width="1" height="9" fill="#bcd8f4"/><circle cx="7.8" cy="9" r="4.6" fill="#a8d0f4" fill-opacity="0.55" stroke="#000" stroke-width="1.3"/><line x1="11.2" y1="12.4" x2="15.5" y2="16.6" stroke="#000" stroke-width="2.2"/><line x1="12" y1="12.6" x2="15.2" y2="15.8" stroke="#e0e8f0" stroke-width="0.6"/></svg>
<svg style="position:absolute;left:73px;top:431px;overflow:visible" width="20" height="21"><rect x="3.5" y="3.5" width="11" height="13" fill="#fff" stroke="#000" stroke-width="1.4"/><rect x="5" y="5" width="8.5" height="7" fill="#5a8a00"/><rect x="5" y="13" width="8.5" height="2" fill="#a0c8e8"/><rect x="9" y="5" width="4.5" height="7" fill="#86c000" opacity="0.5"/><polygon points="13,9.5 18,13.5 13,17.5" fill="#fff" stroke="#000" stroke-width="0.9"/></svg>
<svg style="position:absolute;left:93px;top:431px;overflow:visible" width="20" height="21"><rect x="3.5" y="3.5" width="11" height="13" fill="#fff" stroke="#000" stroke-width="1.4"/><rect x="5" y="5" width="8.5" height="2.5" fill="#5a8a00"/><rect x="5" y="8.5" width="8.5" height="2.5" fill="#5a8a00"/><rect x="5" y="12" width="8.5" height="3" fill="#5a8a00"/><rect x="9" y="5" width="4.5" height="7" fill="#86c000" opacity="0.5"/><polygon points="13,9.5 18,13.5 13,17.5" fill="#fff" stroke="#000" stroke-width="0.9"/></svg>
<svg style="position:absolute;left:115px;top:431px;overflow:visible" width="20" height="21"><rect x="3.5" y="3.5" width="11" height="13" fill="#f0eee4" stroke="#b9b9b1" stroke-width="1.3"/><line x1="5" y1="7" x2="12" y2="7" stroke="#b9b9b1"/><line x1="5" y1="10" x2="12" y2="10" stroke="#b9b9b1"/><line x1="5" y1="13" x2="12" y2="13" stroke="#b9b9b1"/><polygon points="13,9.5 18,13.5 13,17.5" fill="#fff" stroke="#b9b9b1" stroke-width="0.9"/></svg>
<svg style="position:absolute;left:143px;top:431px;overflow:visible" width="20" height="21"><rect x="4" y="4" width="12" height="2" fill="#b9b9b1"/><rect x="8" y="2.5" width="4" height="2" fill="none" stroke="#b9b9b1"/><path d="M5 7 L6 17 L14 17 L15 7 Z" fill="#e4e0d4" stroke="#b9b9b1" stroke-width="1.2"/><line x1="8" y1="9" x2="8" y2="15" stroke="#b9b9b1"/><line x1="10" y1="9" x2="10" y2="15" stroke="#b9b9b1"/><line x1="12" y1="9" x2="12" y2="15" stroke="#b9b9b1"/></svg>
<svg style="position:absolute;left:164px;top:431px;overflow:visible" width="20" height="21"><path d="M6.5 10 L6.5 7 A3.5 3.5 0 0 1 13.5 7 L13.5 10" fill="none" stroke="#b9b9b1" stroke-width="1.6"/><rect x="4.5" y="10" width="11" height="7" fill="#d8d6ce" stroke="#b9b9b1" stroke-width="1.2"/></svg>
<svg style="position:absolute;left:184px;top:431px;overflow:visible" width="20" height="21"><path d="M11 10 L11 6 A3.5 3.5 0 0 1 18 6 L18 8" fill="none" stroke="#b9b9b1" stroke-width="1.6"/><rect x="3" y="10" width="10" height="7" fill="#d8d6ce" stroke="#b9b9b1" stroke-width="1.2"/></svg>
<svg style="position:absolute;left:213px;top:431px;overflow:visible" width="20" height="21"><rect x="3.5" y="3.5" width="8" height="9" fill="#eeeadc" stroke="#b9b9b1"/><rect x="7.5" y="7.5" width="8" height="9" fill="#f4f0e4" stroke="#e0b0a8"/></svg>
<svg style="position:absolute;left:233px;top:431px;overflow:visible" width="20" height="21"><rect x="3.0" y="3" width="2.5" height="2.5" fill="#c8d8e0" stroke="#b9b9b1" stroke-width="0.5"/><rect x="3.0" y="14" width="2.5" height="2.5" fill="#f0ecd8" stroke="#b9b9b1" stroke-width="0.5"/><rect x="6.5" y="3" width="2.5" height="2.5" fill="#c8d8e0" stroke="#b9b9b1" stroke-width="0.5"/><rect x="6.5" y="14" width="2.5" height="2.5" fill="#f0ecd8" stroke="#b9b9b1" stroke-width="0.5"/><rect x="10.0" y="3" width="2.5" height="2.5" fill="#c8d8e0" stroke="#b9b9b1" stroke-width="0.5"/><rect x="10.0" y="14" width="2.5" height="2.5" fill="#f0ecd8" stroke="#b9b9b1" stroke-width="0.5"/><rect x="13.5" y="3" width="2.5" height="2.5" fill="#c8d8e0" stroke="#b9b9b1" stroke-width="0.5"/><rect x="13.5" y="14" width="2.5" height="2.5" fill="#f0ecd8" stroke="#b9b9b1" stroke-width="0.5"/><path d="M6.5 7 L6.5 11 M4.5 9.5 L6.5 11.5 L8.5 9.5 M13 7 L13 11 M11 9.5 L13 11.5 L15 9.5" stroke="#a8a8d0" fill="none"/></svg>
<svg style="position:absolute;left:262px;top:431px;overflow:visible" width="20" height="21"><rect x="8" y="3.5" width="4" height="4" fill="#f4e890" stroke="#000" stroke-width="1.1"/><rect x="5.5" y="7.5" width="9" height="3.5" fill="#2060b0" stroke="#000" stroke-width="1.1"/><rect x="3.5" y="11" width="13" height="4.5" fill="#90c040" stroke="#000" stroke-width="1.1"/></svg>
<svg style="position:absolute;left:282px;top:431px;overflow:visible" width="20" height="21"><rect x="3.5" y="3.5" width="13" height="4" fill="#90c040" stroke="#000" stroke-width="1.1"/><rect x="5.5" y="7.5" width="9" height="3.5" fill="#2060b0" stroke="#000" stroke-width="1.1"/><rect x="6" y="8.5" width="3" height="2" fill="#f08080"/><rect x="8" y="11" width="4" height="4.5" fill="#f4e890" stroke="#000" stroke-width="1.1"/></svg>
<svg style="position:absolute;left:303px;top:431px;overflow:visible" width="20" height="21"><path d="M3 4 L17 4 L11 10 L11 17 L9 17 L9 10 Z" fill="#5a8ab8" stroke="#000" stroke-width="1.1"/><path d="M5 5 L15 5 L11 8.5" fill="#d0e4f4"/><path d="M11 11 A2.5 2.5 0 0 1 11 16" fill="none" stroke="#000"/></svg>
<svg style="position:absolute;left:324px;top:431px;overflow:visible" width="20" height="21"><path d="M3 4 L17 4 L12 9 L12 15 L9 15 L9 9 Z" fill="#e8e4d8" stroke="#b9b9b1"/><path d="M4 13 L9 9 L14 13 L12 13 L12 17 L7 17 L7 13 Z" fill="#f4e8b0" stroke="#b9b9b1" stroke-width="0.8"/></svg>
<svg style="position:absolute;left:353px;top:431px;overflow:visible" width="20" height="21"><path d="M3.5 6.5 L16.5 6.5 L16.5 16.5 L8 16.5 L8 16.5 Z" fill="#d8e8f8" stroke="#000" stroke-width="1.1"/><path d="M3.5 6.5 L3.5 14 L6 17 L8.5 14 L8.5 6.5" fill="#fff" stroke="#000" stroke-width="1.1"/><path d="M6 6.5 L6 3.5 L10 3.5 L10 6.5" fill="none" stroke="#000" stroke-width="1.1"/></svg>
<svg style="position:absolute;left:395px;top:431px;overflow:visible" width="20" height="21"><rect x="3.5" y="3.5" width="13" height="13" fill="#f2eee2" stroke="#b9b9b1"/><line x1="5" y1="6.5" x2="12" y2="6.5" stroke="#b9b9b1"/><line x1="5" y1="9.5" x2="12" y2="9.5" stroke="#b9b9b1"/><line x1="5" y1="12.5" x2="12" y2="12.5" stroke="#b9b9b1"/><rect x="13" y="5" width="2" height="2" fill="#e8a0a0"/><rect x="13" y="9" width="2" height="2" fill="#e8d080"/><rect x="13" y="13" width="2" height="2" fill="#e8d080"/></svg>
<svg style="position:absolute;left:53px;top:768px;overflow:visible" width="20" height="21"><rect x="5.5" y="4.5" width="11" height="9" fill="#3a80e0"/><rect x="5.5" y="6.5" width="11" height="1" fill="#bcd8f4"/><rect x="5.5" y="9.5" width="11" height="1" fill="#bcd8f4"/><rect x="11" y="4.5" width="1" height="9" fill="#bcd8f4"/><circle cx="7.8" cy="9" r="4.6" fill="#a8d0f4" fill-opacity="0.55" stroke="#000" stroke-width="1.3"/><line x1="11.2" y1="12.4" x2="15.5" y2="16.6" stroke="#000" stroke-width="2.2"/><line x1="12" y1="12.6" x2="15.2" y2="15.8" stroke="#e0e8f0" stroke-width="0.6"/></svg>
<svg style="position:absolute;left:74px;top:768px;overflow:visible" width="20" height="21"><rect x="3.5" y="4.5" width="11" height="11" fill="#f0ecdc" stroke="#b9b9b1"/><line x1="5" y1="7.5" x2="12" y2="7.5" stroke="#b9b9b1"/><rect x="5" y="9.5" width="5" height="2" fill="#b8d4a0"/><path d="M11 10 L11 18 M7 14 L15 14" stroke="#b8d8a0" stroke-width="3"/></svg>
<svg style="position:absolute;left:95px;top:768px;overflow:visible" width="20" height="21"><rect x="3.5" y="4.5" width="11" height="11" fill="#f0ecdc" stroke="#b9b9b1"/><line x1="5" y1="7.5" x2="12" y2="7.5" stroke="#b9b9b1"/><rect x="5" y="9.5" width="5" height="2" fill="#b8d4a0"/><rect x="9" y="13" width="9" height="3" fill="#e89090"/></svg>
<svg style="position:absolute;left:128px;top:766px;overflow:visible" width="30" height="24"><ellipse cx="8.3" cy="13.3" rx="2.1" ry="2.7" transform="rotate(-25 8.3 13.3)" fill="#fff" stroke="#000" stroke-width="1.2"/><ellipse cx="14.6" cy="15.2" rx="2.1" ry="2.7" transform="rotate(-15 14.6 15.2)" fill="#fff" stroke="#000" stroke-width="1.2"/><path d="M10.3 13.2 L12.6 13.6" stroke="#000" stroke-width="1.1"/><path d="M8.2 10.6 L11.5 6.7 L13 6.6 L13.6 7.8 L12.4 9.6" fill="none" stroke="#000" stroke-width="1.1"/><path d="M16.3 12.6 L19.6 9.6 L21.2 9.6 L21.6 11 L20.5 12.6" fill="none" stroke="#000" stroke-width="1.1"/></svg>
<svg style="position:absolute;left:289px;top:770px;overflow:visible" width="16" height="14" shape-rendering="crispEdges"><rect x="0.5" y="0.5" width="15" height="13" fill="#6e8aa0" stroke="#000"/><rect x="1" y="1" width="4" height="12" fill="#20c8f0"/><rect x="1" y="1" width="4" height="4" fill="#a0d8f0"/><rect x="2" y="2" width="2" height="2" fill="#f4e090"/><line x1="5.5" y1="0" x2="5.5" y2="14" stroke="#000"/><line x1="10.5" y1="0" x2="10.5" y2="14" stroke="#000"/><line x1="0" y1="5.5" x2="16" y2="5.5" stroke="#000"/></svg>
<svg style="position:absolute;left:614px;top:770px;overflow:visible" width="14" height="14" shape-rendering="crispEdges"><rect x="0" y="7" width="14" height="7" fill="#e0a8a0"/><text x="1" y="13.5" font-size="7" font-family="Liberation Mono" fill="#fff">100</text><text x="0" y="6.5" font-size="7" font-family="Liberation Sans" fill="#a0a0d8">$¥</text></svg>
<svg style="position:absolute;left:1129px;top:180px;overflow:visible" width="14" height="20" shape-rendering="crispEdges"><rect x="0" y="0" width="14" height="20" fill="#2e6a9c"/><rect x="1" y="2" width="13" height="17" fill="#000"/><rect x="2" y="3" width="12" height="15" fill="#dfeaf6"/><rect x="2" y="3" width="12" height="2" fill="#5a8ad0"/><rect x="2" y="5" width="3" height="13" fill="#ffe000"/><rect x="5" y="3" width="1" height="15" fill="#4a6a9a"/><rect x="9" y="3" width="1" height="15" fill="#4a6a9a"/><rect x="10" y="5" width="3" height="13" fill="#fff"/><rect x="6" y="5" width="3" height="13" fill="#e4eef8"/></svg>
<svg style="position:absolute;left:1123px;top:602px;overflow:visible" width="14" height="20" shape-rendering="crispEdges"><rect x="0" y="0" width="14" height="20" fill="#2e6a9c"/><rect x="1" y="2" width="13" height="17" fill="#000"/><rect x="2" y="3" width="12" height="15" fill="#dfeaf6"/><rect x="2" y="3" width="12" height="2" fill="#5a8ad0"/><rect x="2" y="5" width="3" height="13" fill="#ffe000"/><rect x="5" y="3" width="1" height="15" fill="#4a6a9a"/><rect x="9" y="3" width="1" height="15" fill="#4a6a9a"/><rect x="10" y="5" width="3" height="13" fill="#fff"/><rect x="6" y="5" width="3" height="13" fill="#e4eef8"/></svg>
<svg style="position:absolute;left:1115px;top:80px;overflow:visible" width="29" height="19" shape-rendering="crispEdges"><rect x="0" y="0" width="29" height="19" fill="#f4e2b0"/><rect x="0" y="0" width="29" height="1" fill="#5a5a5a"/><rect x="0" y="0" width="1.5" height="19" fill="#5a5a5a"/><rect x="27.5" y="0" width="1.5" height="19" fill="#5a5a5a"/></svg>
<svg style="position:absolute;left:1115px;top:80px;overflow:visible" width="29" height="19"><path d="M2.5 2.5 L11 2.5 L11 7.5 L7.5 8.5 L4.5 13.5 L4 8.5 L2.5 8 Z" fill="#ffff00" stroke="#000" stroke-width="1"/><line x1="4" y1="4.5" x2="10" y2="4.5" stroke="#5a5a00" stroke-dasharray="1.5 1"/><path d="M6.5 12.5 L11 8.5 L13.5 10.5 L9 15.5 Z" fill="#d0e4f8" stroke="#000" stroke-width="0.8"/><rect x="11.7" y="3.2" width="5.6" height="8.8" rx="1" fill="#3a8ff0" stroke="#000" stroke-width="1"/><polygon points="13.5,5.5 15.8,7.6 13.5,9.7" fill="#000"/><rect x="17.8" y="3.5" width="8" height="9" fill="#fff" stroke="#000" stroke-width="1"/><polygon points="17.5,2.5 26,2.5 21.8,6.5" fill="#000"/><line x1="19.5" y1="8.5" x2="24" y2="8.5" stroke="#000"/><line x1="19.5" y1="10.8" x2="24" y2="10.8" stroke="#000"/></svg>
<svg style="position:absolute;left:187px;top:140px;overflow:visible" width="10" height="12" shape-rendering="crispEdges"><rect x="1.5" y="2.5" width="7" height="9" fill="#e4eef8" stroke="#4a5a70"/><line x1="3" y1="6.5" x2="7" y2="6.5" stroke="#4a5a70"/><line x1="3" y1="8.5" x2="7" y2="8.5" stroke="#4a5a70"/><polygon points="1,0 9,0 5,4" fill="#000"/></svg>
<svg style="position:absolute;left:417px;top:476px;overflow:visible" width="10" height="12" shape-rendering="crispEdges"><rect x="1.5" y="2.5" width="7" height="9" fill="#e4eef8" stroke="#4a5a70"/><line x1="3" y1="6.5" x2="7" y2="6.5" stroke="#4a5a70"/><line x1="3" y1="8.5" x2="7" y2="8.5" stroke="#4a5a70"/><polygon points="1,0 9,0 5,4" fill="#000"/></svg>
<svg style="position:absolute;left:1122px;top:496px;overflow:visible" width="21" height="16" shape-rendering="crispEdges"><rect x="0.5" y="0.5" width="20" height="15" fill="#eaf1fa" stroke="#3a3a50"/><rect x="3" y="3" width="6" height="3" fill="#4a70b0"/><path d="M3.5 3.5 L8.5 3.5 L8.5 5.5 L17.5 5.5 L17.5 12.5 L3.5 12.5 Z" fill="none" stroke="#000" stroke-width="1"/><rect x="4" y="6" width="13" height="6" fill="#fff"/><polygon points="13,10 19,10 16,13" fill="#000"/></svg>
<svg style="position:absolute;left:1127px;top:875px;overflow:visible" width="14" height="13" shape-rendering="crispEdges"><rect x="0.5" y="0.5" width="12" height="11" fill="#f8f0c0" stroke="#333"/><rect x="2" y="2" width="2" height="2" fill="#000"/><line x1="5" y1="3" x2="11" y2="3" stroke="#000"/><line x1="5" y1="5.5" x2="11" y2="5.5" stroke="#000"/><line x1="5" y1="8" x2="11" y2="8" stroke="#000"/></svg>
<svg style="position:absolute;left:555px;top:578px;overflow:visible" width="14" height="20"><path d="M0.8 0.8 L0.8 15.8 L4.3 12.6 L7.2 18.3 L9.6 17.4 L7.2 11.9 L11.4 11.6 Z" fill="#fff" stroke="#000" stroke-width="1.1" stroke-linejoin="round"/></svg>
</body></html>
